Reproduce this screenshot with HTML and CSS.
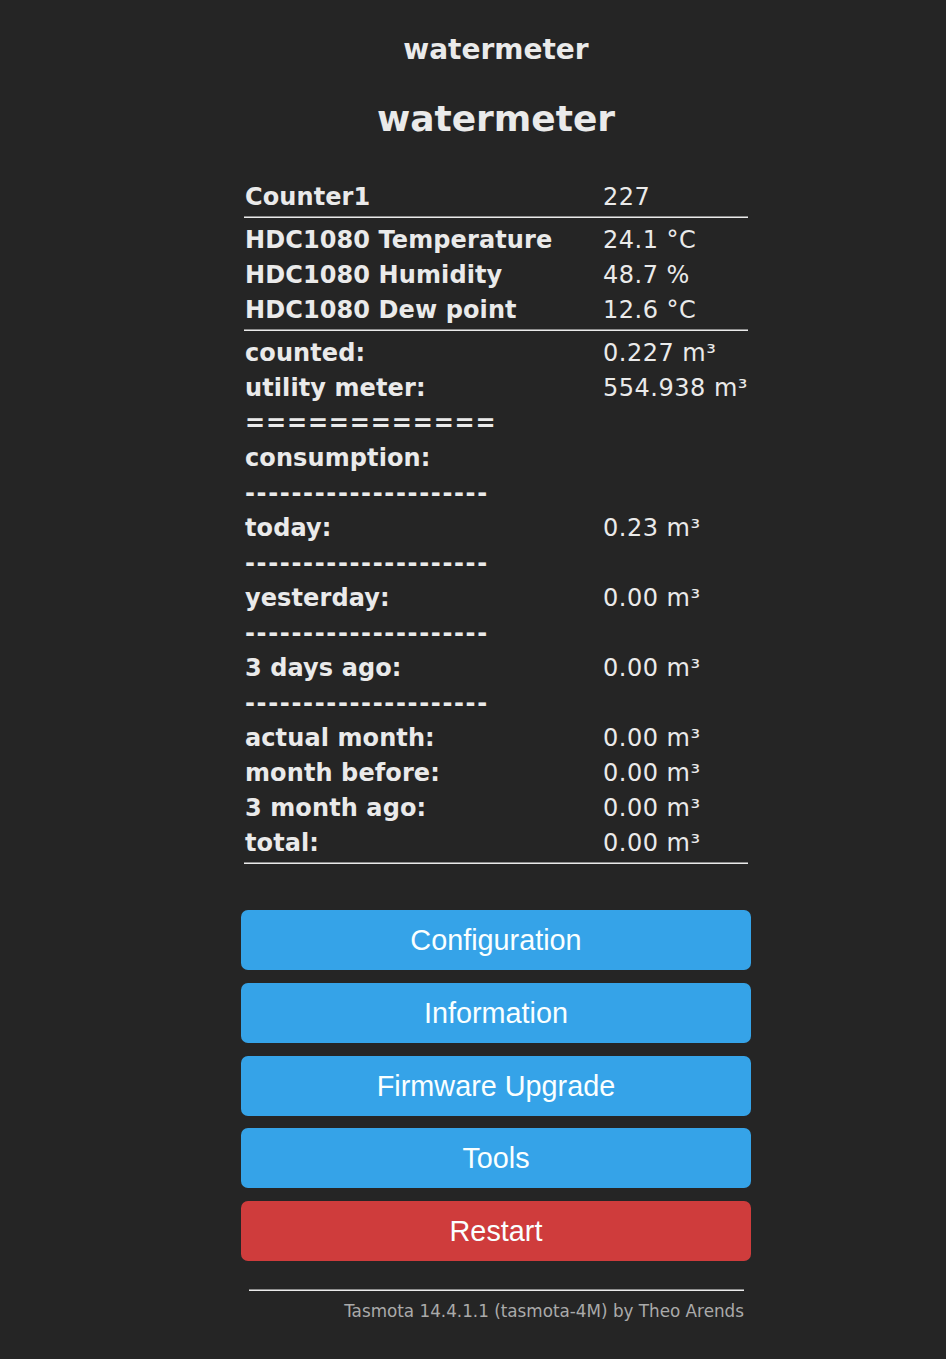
FILE: index.html
```html
<!DOCTYPE html>
<html>
<head>
<meta charset="utf-8">
<title>watermeter - Main Menu</title>
<link rel="stylesheet" href="styles.css">
</head>
<body>
<div class="page">
  <div class="header">
    <h3 class="module">watermeter</h3>
    <h2 class="device">watermeter</h2>
  </div>
  <div class="sensors">
    <div class="row"><div class="k">Counter1</div><div class="v">227</div></div>
    <div class="sep"><div class="line"></div></div>
    <div class="row"><div class="k">HDC1080 Temperature</div><div class="v">24.1 °C</div></div>
    <div class="row"><div class="k">HDC1080 Humidity</div><div class="v">48.7 %</div></div>
    <div class="row"><div class="k">HDC1080 Dew point</div><div class="v">12.6 °C</div></div>
    <div class="sep"><div class="line"></div></div>
    <div class="row"><div class="k">counted:</div><div class="v">0.227 m³</div></div>
    <div class="row"><div class="k">utility meter:</div><div class="v">554.938 m³</div></div>
    <div class="row"><div class="k eq">============</div><div class="v"></div></div>
    <div class="row"><div class="k">consumption:</div><div class="v"></div></div>
    <div class="row"><div class="k dash">---------------------</div><div class="v"></div></div>
    <div class="row"><div class="k">today:</div><div class="v">0.23 m³</div></div>
    <div class="row"><div class="k dash">---------------------</div><div class="v"></div></div>
    <div class="row"><div class="k">yesterday:</div><div class="v">0.00 m³</div></div>
    <div class="row"><div class="k dash">---------------------</div><div class="v"></div></div>
    <div class="row"><div class="k">3 days ago:</div><div class="v">0.00 m³</div></div>
    <div class="row"><div class="k dash">---------------------</div><div class="v"></div></div>
    <div class="row"><div class="k">actual month:</div><div class="v">0.00 m³</div></div>
    <div class="row"><div class="k">month before:</div><div class="v">0.00 m³</div></div>
    <div class="row"><div class="k">3 month ago:</div><div class="v">0.00 m³</div></div>
    <div class="row"><div class="k">total:</div><div class="v">0.00 m³</div></div>
    <div class="sep"><div class="line"></div></div>
  </div>
  <div class="buttons">
    <button class="btn">Configuration</button>
    <button class="btn">Information</button>
    <button class="btn">Firmware Upgrade</button>
    <button class="btn">Tools</button>
    <button class="btn btn-reset">Restart</button>
  </div>
  <div class="footer">
    <div class="fline"></div>
    <div class="ftext">Tasmota 14.4.1.1 (tasmota-4M) by Theo Arends</div>
  </div>
</div>
</body>
</html>
```
FILE: styles.css
```css
html, body {
  margin: 0;
  padding: 0;
  background: #252525;
}
body {
  font-family: "DejaVu Sans", Verdana, sans-serif;
  font-size: 24px;
  color: #eaeaea;
}
.page {
  margin-left: 241px;
  width: 510px;
  padding-top: 34px;
  padding-bottom: 40px;
}
.header {
  text-align: center;
}
.module {
  margin: 0;
  font-size: 28px;
  line-height: 32px;
  font-weight: bold;
}
.device {
  margin: 31.5px 0 0 0;
  font-size: 36px;
  line-height: 42px;
  font-weight: bold;
}
.sensors {
  margin: 39.5px 0 0 3px;
  width: 504px;
}
.row {
  display: grid;
  grid-template-columns: 359px 1fr;
  box-sizing: border-box;
  height: 35px;
  padding-top: 2px;
  line-height: 33px;
  white-space: nowrap;
}
.k {
  font-weight: bold;
  padding-left: 1px;
  letter-spacing: 0.1px;
}
.v {
  letter-spacing: 0.5px;
}
.dash {
  letter-spacing: 1.65px;
}
.eq {
  letter-spacing: 0.85px;
}
.sep {
  height: 8px;
  box-sizing: border-box;
  padding-top: 2px;
}
.line {
  height: 1px;
  border-top: 1px solid #8c8c8c;
  background: #eaeaea;
}
.buttons {
  margin-top: 42px;
  display: flex;
  flex-direction: column;
  gap: 12.75px;
}
.btn {
  display: block;
  width: 100%;
  height: 60px;
  border: 0;
  border-radius: 7px;
  padding: 0 6px;
  background: #35a3e8;
  color: #faffff;
  font-family: "Liberation Sans", Arial, sans-serif;
  font-size: 28.8px;
  line-height: 60px;
  text-align: center;
}
.btn-reset {
  background: #cf3c3c;
}
.footer {
  margin-top: 28px;
}
.fline {
  margin: 0 7px 0 8px;
  height: 1px;
  border-top: 1px solid #8c8c8c;
  background: #eaeaea;
}
.ftext {
  margin-top: 10.5px;
  padding-right: 7px;
  text-align: right;
  font-size: 16.8px;
  line-height: 19px;
  color: #aaaaaa;
}
```
